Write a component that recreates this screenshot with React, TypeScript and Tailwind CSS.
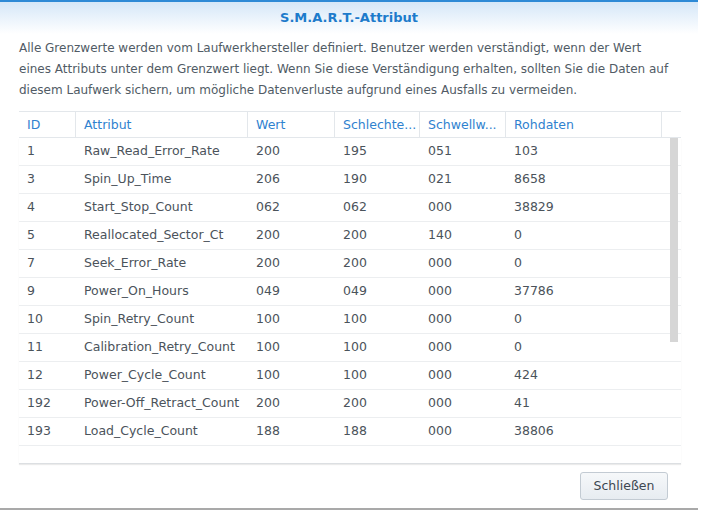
import React from 'react';

const rows = [
  ['1', 'Raw_Read_Error_Rate', '200', '195', '051', '103'],
  ['3', 'Spin_Up_Time', '206', '190', '021', '8658'],
  ['4', 'Start_Stop_Count', '062', '062', '000', '38829'],
  ['5', 'Reallocated_Sector_Ct', '200', '200', '140', '0'],
  ['7', 'Seek_Error_Rate', '200', '200', '000', '0'],
  ['9', 'Power_On_Hours', '049', '049', '000', '37786'],
  ['10', 'Spin_Retry_Count', '100', '100', '000', '0'],
  ['11', 'Calibration_Retry_Count', '100', '100', '000', '0'],
  ['12', 'Power_Cycle_Count', '100', '100', '000', '424'],
  ['192', 'Power-Off_Retract_Count', '200', '200', '000', '41'],
  ['193', 'Load_Cycle_Count', '188', '188', '000', '38806'],
];

const widths = ['w-[57px]', 'w-[172px]', 'w-[87px]', 'w-[85px]', 'w-[86px]', 'w-[156px]'];
const headers = ['ID', 'Attribut', 'Wert', 'Schlechte...', 'Schwellw...', 'Rohdaten'];

export default function App() {
  return (
    <div className="w-[705px] h-[524px] bg-white overflow-hidden font-['DejaVu_Sans',sans-serif] text-[12px]">
      <div className="w-[698px] h-[510px] flex flex-col border-t-2 border-[#2e8ad6] border-b-2 border-b-[#a9a9a9]">
        <div className="shrink-0 h-[32px] flex items-center justify-center bg-gradient-to-b from-[#d5e7f8] to-white">
          <span className="text-[13px] font-bold text-[#1d7bcb]">S.M.A.R.T.-Attribut</span>
        </div>
        <div className="shrink-0 px-[19px] pt-[4px] leading-[21px] text-[#515b65] text-[12px] whitespace-nowrap">
          <div>Alle Grenzwerte werden vom Laufwerkhersteller definiert. Benutzer werden verständigt, wenn der Wert</div>
          <div>eines Attributs unter dem Grenzwert liegt. Wenn Sie diese Verständigung erhalten, sollten Sie die Daten auf</div>
          <div>diesem Laufwerk sichern, um mögliche Datenverluste aufgrund eines Ausfalls zu vermeiden.</div>
        </div>
        <div className="shrink-0 ml-[19px] w-[662px] mt-[10px] text-[12.5px]">
          <div className="flex h-[27px] border-t border-[#e3e7eb] border-b border-b-[#e3e7eb] text-[#2f82cf]">
            {headers.map((h, i) => (
              <div key={h} className={`${widths[i]} flex items-center pl-[8px] pt-[2px] border-r border-[#e3e7eb] whitespace-nowrap`}>
                {h}
              </div>
            ))}
          </div>
          <div className="relative h-[326px] border-b border-[#dcdfe2] shadow-[0_1px_1px_rgba(0,0,0,0.08)]">
            {rows.map((r) => (
              <div key={r[0]} className="flex h-[28px] border-b border-[#eceef0] text-[#4b535b]">
                {r.map((c, i) => (
                  <div key={i} className={`${widths[i]} flex items-center pl-[8px] whitespace-nowrap`}>
                    {c}
                  </div>
                ))}
              </div>
            ))}
            <div className="absolute left-[651px] top-0 w-[8px] h-[204px] bg-[#d6d6d6]" />
          </div>
        </div>
        <div className="shrink-0 flex justify-end pr-[30px] mt-[8px]">
          <button className="w-[88px] h-[28px] rounded-[3px] border border-[#c3cbd3] bg-gradient-to-b from-[#f6f8fa] to-[#e7ecf1] text-[#3d4751] text-[12.5px]">
            Schließen
          </button>
        </div>
      </div>
    </div>
  );
}
